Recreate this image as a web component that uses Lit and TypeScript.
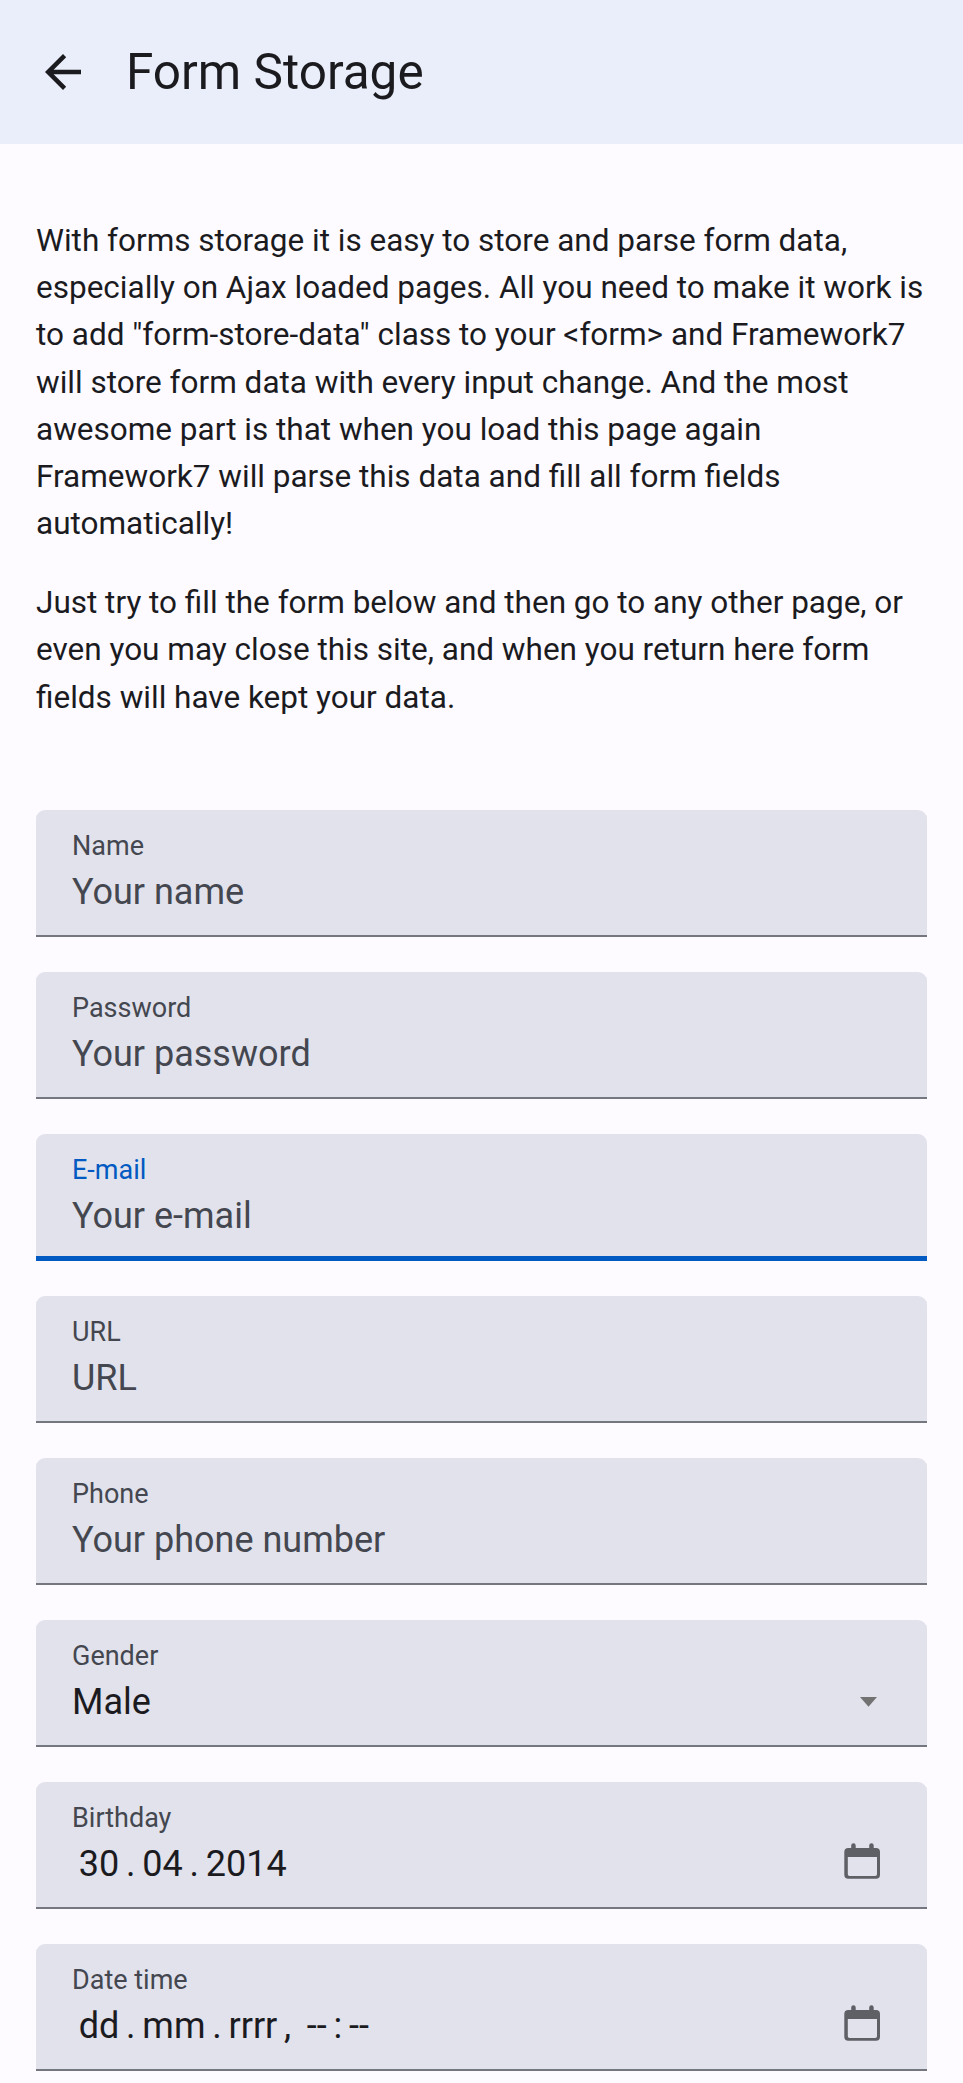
import { LitElement, html, css, svg, nothing } from "lit";
import { customElement, property } from "lit/decorators.js";

type Kind = "text" | "select" | "date";

interface Field {
  label: string;
  kind: Kind;
  placeholder?: string;
  type?: string;
  value?: string;
  parts?: string[];
  focused?: boolean;
}

const FIELDS: Field[] = [
  { label: "Name", kind: "text", placeholder: "Your name" },
  { label: "Password", kind: "text", type: "password", placeholder: "Your password" },
  { label: "E-mail", kind: "text", type: "email", placeholder: "Your e-mail", focused: true },
  { label: "URL", kind: "text", type: "url", placeholder: "URL" },
  { label: "Phone", kind: "text", type: "tel", placeholder: "Your phone number" },
  { label: "Gender", kind: "select", value: "Male" },
  { label: "Birthday", kind: "date", parts: ["30", ".", "04", ".", "2014"] },
  { label: "Date time", kind: "date", parts: ["dd", ".", "mm", ".", "rrrr", ", ", "--", ":", "--"] },
];

const backIcon = svg`<path d="M20 11H7.83l5.59-5.59L12 4l-8 8 8 8 1.41-1.41L7.83 13H20v-2z" fill="currentColor"/>`;

@customElement("form-field")
export class FormField extends LitElement {
  @property({ attribute: false }) field!: Field;

  static styles = css`
    :host {
      display: block;
    }
    .field {
      box-sizing: border-box;
      height: 127px;
      padding: 18px 36px 0;
      background: #e1e2ec;
      border-radius: 9px 9px 0 0;
      color: #1b1b1f;
      display: flex;
      flex-direction: column;
    }
    .plain {
      box-shadow: inset 0 -2px #74777f;
    }
    .focused {
      box-shadow: inset 0 -5px #005ac1;
    }
    .label {
      font-size: 27px;
      line-height: 36px;
      color: #44474f;
    }
    .focused .label {
      color: #005ac1;
    }
    .row {
      display: flex;
      align-items: center;
      justify-content: space-between;
      height: 54px;
      margin-top: 1px;
    }
    .input {
      flex: 1;
      min-width: 0;
      height: 54px;
      padding: 0;
      border: 0;
      outline: 0;
      background: none;
      font: inherit;
      font-size: 36px;
      color: inherit;
    }
    .input::placeholder {
      color: #44474f;
      opacity: 1;
    }
    .value {
      font-size: 36px;
      line-height: 54px;
    }
    .parts {
      display: flex;
      gap: 6.75px;
      padding-left: 6.75px;
      white-space: pre;
    }
    .arrow {
      width: 18px;
      height: 10px;
      margin-right: 13px;
    }
    .calendar {
      width: 36px;
      height: 36px;
      margin: 0 11px 6px 0;
      color: #5f6066;
    }
  `;

  private control() {
    const f = this.field;
    if (f.kind === "text") {
      return html`<input class="input" type=${f.type ?? "text"} placeholder=${f.placeholder ?? ""} aria-label=${f.label} />`;
    }
    if (f.kind === "select") {
      return html`<span class="value">${f.value}</span>
        <svg class="arrow" viewBox="0 0 18 10"><path d="M0 0h17L8.5 9.8z" fill="#727272" /></svg>`;
    }
    return html`<span class="value parts">${f.parts?.map((p) => html`<span>${p}</span>`) ?? nothing}</span>
      <svg class="calendar" viewBox="0 0 36 36">
        <path
          fill="currentColor"
          fill-rule="evenodd"
          d="M7.2 5V2.5a2.2 2.2 0 0 1 4.5 0V5H25.2V2.5a2.2 2.2 0 0 1 4.5 0V5H32a4 4 0 0 1 4 4v22.7a4 4 0 0 1-4 4H4.3a4 4 0 0 1-4-4V9a4 4 0 0 1 4-4zM3.8 14v17.2a1.8 1.8 0 0 0 1.8 1.8h25.6a1.8 1.8 0 0 0 1.8-1.8V14z"
        />
      </svg>`;
  }

  render() {
    return html`<div class="field ${this.field.focused ? "focused" : "plain"}">
      <div class="label">${this.field.label}</div>
      <div class="row">${this.control()}</div>
    </div>`;
  }
}

@customElement("app-root")
export class AppRoot extends LitElement {
  static styles = css`
    :host {
      display: block;
      height: 2083px;
      overflow: hidden;
      background: #fdfbff;
      color: #1b1b1f;
      font-family: Roboto, sans-serif;
    }
    .navbar {
      display: flex;
      align-items: center;
      gap: 36px;
      height: 144px;
      padding-left: 36px;
      background: #e9eefa;
    }
    .back {
      width: 54px;
      height: 54px;
    }
    .title {
      margin: 0;
      font-size: 49.5px;
      font-weight: 400;
      line-height: 63px;
    }
    .intro {
      padding: 72.75px 36px 71.25px;
      font-size: 31.5px;
      line-height: 47.25px;
    }
    .intro p {
      margin: 0 0 31.5px;
    }
    .intro p:last-child {
      margin-bottom: 0;
    }
    .form {
      display: flex;
      flex-direction: column;
      gap: 35px;
      padding: 18px 36px;
    }
  `;

  render() {
    return html`
      <header class="navbar">
        <svg class="back" viewBox="0 0 24 24">${backIcon}</svg>
        <h1 class="title">Form Storage</h1>
      </header>
      <section class="intro">
        <p>
          With forms storage it is easy to store and parse form data, especially on Ajax loaded pages. All you need to
          make it work is to add "form-store-data" class to your &lt;form&gt; and Framework7 will store form data with
          every input change. And the most awesome part is that when you load this page again Framework7 will parse this
          data and fill all form fields automatically!
        </p>
        <p>
          Just try to fill the form below and then go to any other page, or even you may close this site, and when you
          return here form fields will have kept your data.
        </p>
      </section>
      <form class="form">${FIELDS.map((f) => html`<form-field .field=${f}></form-field>`)}</form>
    `;
  }
}
